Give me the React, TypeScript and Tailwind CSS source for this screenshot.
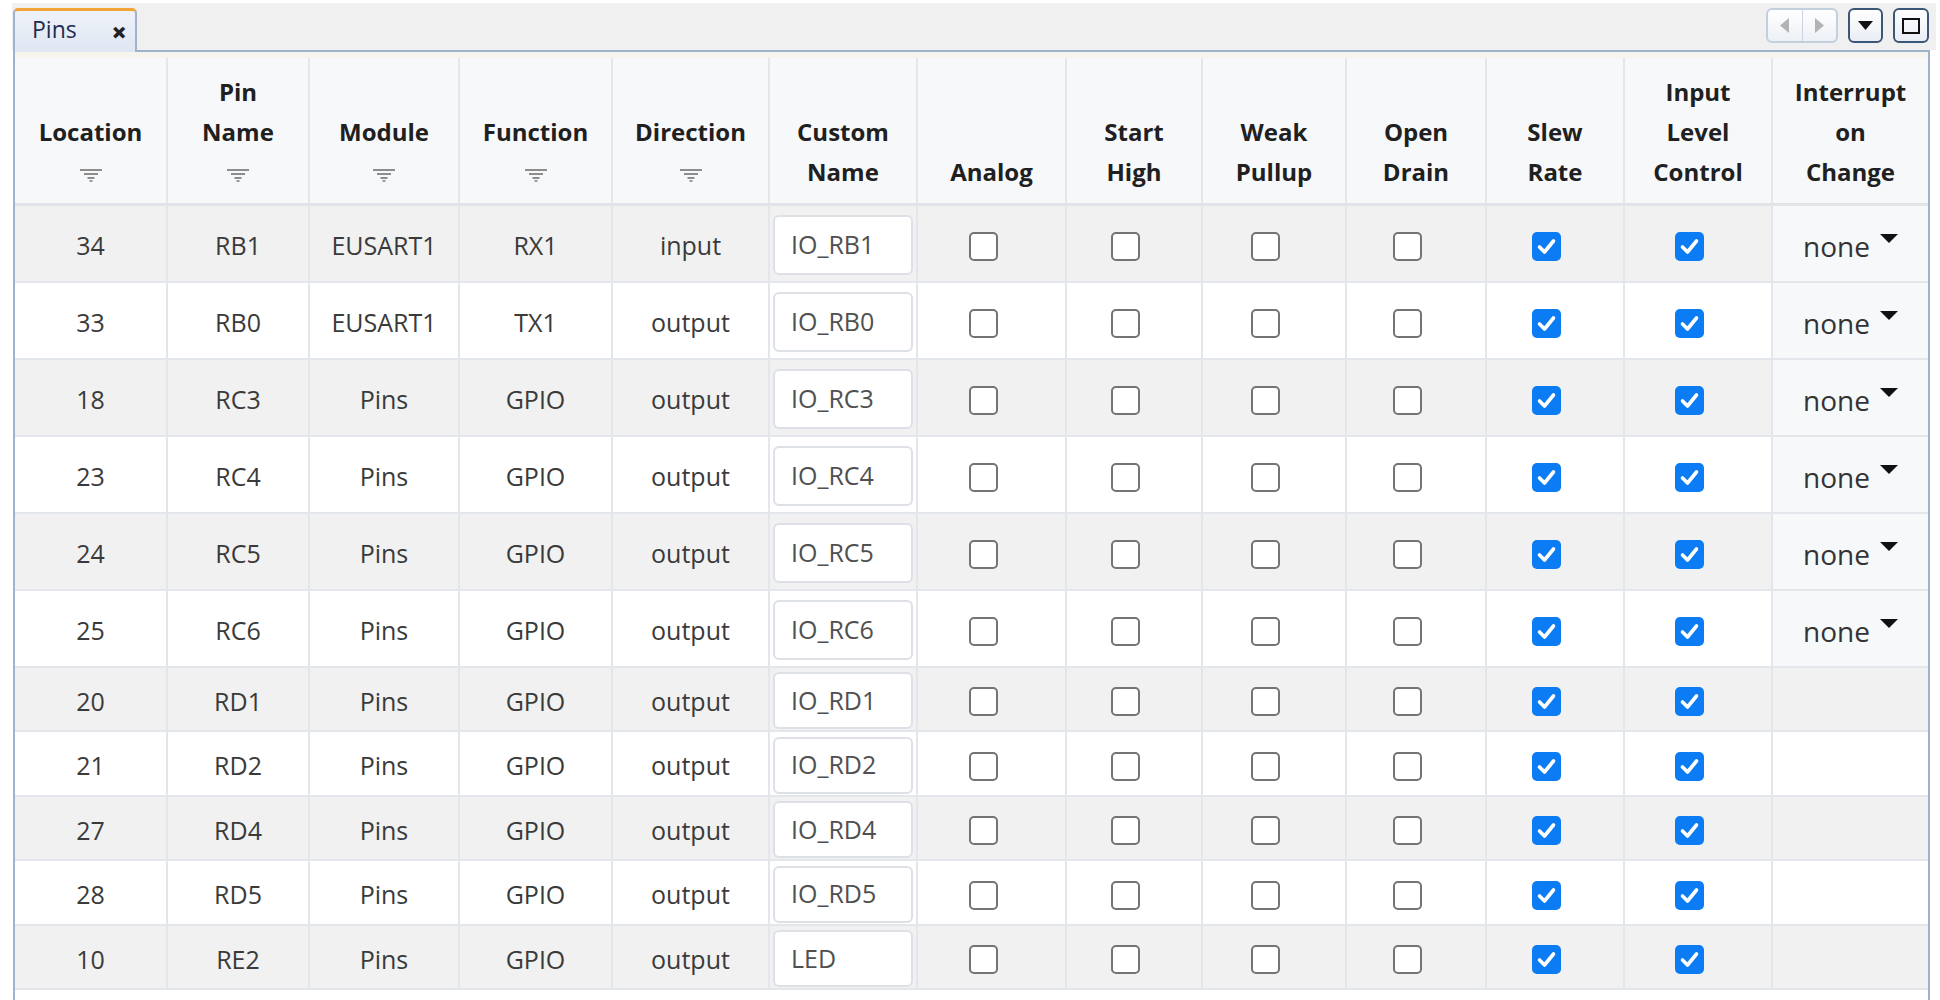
import React from "react";

type Pin = {
  loc: string;
  pin: string;
  mod: string;
  fn: string;
  dir: string;
  name: string;
  ioc: boolean;
};

const pins: Pin[] = [
  { loc: "34", pin: "RB1", mod: "EUSART1", fn: "RX1", dir: "input", name: "IO_RB1", ioc: true },
  { loc: "33", pin: "RB0", mod: "EUSART1", fn: "TX1", dir: "output", name: "IO_RB0", ioc: true },
  { loc: "18", pin: "RC3", mod: "Pins", fn: "GPIO", dir: "output", name: "IO_RC3", ioc: true },
  { loc: "23", pin: "RC4", mod: "Pins", fn: "GPIO", dir: "output", name: "IO_RC4", ioc: true },
  { loc: "24", pin: "RC5", mod: "Pins", fn: "GPIO", dir: "output", name: "IO_RC5", ioc: true },
  { loc: "25", pin: "RC6", mod: "Pins", fn: "GPIO", dir: "output", name: "IO_RC6", ioc: true },
  { loc: "20", pin: "RD1", mod: "Pins", fn: "GPIO", dir: "output", name: "IO_RD1", ioc: false },
  { loc: "21", pin: "RD2", mod: "Pins", fn: "GPIO", dir: "output", name: "IO_RD2", ioc: false },
  { loc: "27", pin: "RD4", mod: "Pins", fn: "GPIO", dir: "output", name: "IO_RD4", ioc: false },
  { loc: "28", pin: "RD5", mod: "Pins", fn: "GPIO", dir: "output", name: "IO_RD5", ioc: false },
  { loc: "10", pin: "RE2", mod: "Pins", fn: "GPIO", dir: "output", name: "LED", ioc: false },
];

// short rows alternate 64/65 so the table ends where the screenshot does
const shortHeights = ["h-[64px]", "h-[65px]", "h-[64px]", "h-[65px]", "h-[64px]"];

const gridCols =
  "grid grid-cols-[153px_142px_150px_153px_157px_148px_149px_136px_144px_140px_138px_148px_155px]";

const headers: { lines: string[]; filter?: boolean }[] = [
  { lines: ["Location"], filter: true },
  { lines: ["Pin", "Name"], filter: true },
  { lines: ["Module"], filter: true },
  { lines: ["Function"], filter: true },
  { lines: ["Direction"], filter: true },
  { lines: ["Custom", "Name"] },
  { lines: ["Analog"] },
  { lines: ["Start", "High"] },
  { lines: ["Weak", "Pullup"] },
  { lines: ["Open", "Drain"] },
  { lines: ["Slew", "Rate"] },
  { lines: ["Input", "Level", "Control"] },
  { lines: ["Interrupt", "on", "Change"] },
];

function FilterIcon() {
  return (
    <svg width="22" height="13" viewBox="0 0 22 13">
      <rect x="0" y="0" width="22" height="2" fill="#8d8d8d" />
      <rect x="4" y="4" width="14" height="2" fill="#8d8d8d" />
      <rect x="7.5" y="8" width="7" height="2" fill="#8d8d8d" />
      <rect x="9.5" y="11" width="3" height="2" fill="#9a9a9a" />
    </svg>
  );
}

function Check({ on }: { on: boolean }) {
  if (on) {
    return (
      <svg width="29" height="29" viewBox="0 0 29 29">
        <rect x="0" y="0" width="29" height="29" rx="5" fill="#0b7cf4" />
        <polyline
          points="7.5,15 12.5,20 21.5,9"
          fill="none"
          stroke="#ffffff"
          strokeWidth="3.6"
          strokeLinecap="round"
          strokeLinejoin="round"
        />
      </svg>
    );
  }
  return <div className="size-[29px] rounded-[5px] border-[2.5px] border-[#747474] bg-white" />;
}

function Cell({ children, className = "" }: { children?: React.ReactNode; className?: string }) {
  return (
    <div className={`flex items-center justify-center border-r-2 border-[#e3e6ea] pt-[5px] ${className}`}>
      {children}
    </div>
  );
}

export default function App() {
  return (
    <div
      className="w-[1940px] h-[1000px] bg-white pt-[3px] pl-[12px] overflow-hidden text-[#3a3a3a]"
      style={{ fontFamily: '"Open Sans", "Noto Sans", sans-serif' }}
    >
      <div className="w-[1924px] h-[997px] flex flex-col bg-white">
        {/* tab strip */}
        <div className="h-[47px] bg-[#f0f0f0] flex items-end pl-[1px] pr-[7px]">
          <div className="relative z-10 -mb-[2px] h-[44px] w-[124px] rounded-t-[5px] border-t-[3px] border-x-2 border-t-[#f2a33a] border-x-[#9fb3cc] bg-gradient-to-b from-[#eef2f9] to-[#dfe6f2] flex items-center pl-[17px] pr-[8px] pb-[4px]">
            <span className="text-[23px] text-[#1f2b50]">Pins</span>
            <span className="ml-auto mt-[3px] text-[27px] font-extrabold leading-none text-[#222]">×</span>
          </div>
          <div className="ml-auto self-start mt-[5px] flex gap-[10px]">
            <div className="h-[35px] w-[72px] flex rounded-[6px] border-2 border-[#c2cfdf] bg-gradient-to-b from-white to-[#edf1f6]">
              <div className="flex-1 flex items-center justify-center border-r border-[#c9d4e2]">
                <svg width="9" height="15" viewBox="0 0 9 15">
                  <polygon points="9,0 9,15 0,7.5" fill="#b3b3b3" />
                </svg>
              </div>
              <div className="flex-1 flex items-center justify-center">
                <svg width="9" height="15" viewBox="0 0 9 15">
                  <polygon points="0,0 0,15 9,7.5" fill="#b3b3b3" />
                </svg>
              </div>
            </div>
            <div className="h-[35px] w-[35px] flex items-center justify-center rounded-[6px] border-2 border-[#3c5677] bg-gradient-to-b from-white to-[#e9eef5]">
              <svg width="15" height="9" viewBox="0 0 15 9">
                <polygon points="0,0 15,0 7.5,9" fill="#111" />
              </svg>
            </div>
            <div className="h-[35px] w-[36px] flex items-center justify-center rounded-[6px] border-2 border-[#3c5677] bg-gradient-to-b from-white to-[#e9eef5]">
              <div className="w-[18px] h-[16px] border-2 border-[#111]" />
            </div>
          </div>
        </div>

        {/* table frame */}
        <div className="flex-1 ml-[1px] w-[1917px] border-l-2 border-r-2 border-t-2 border-[#9fb3cc] bg-white">
          <div className="h-[6px] bg-[#f5f5ee]" />
          <div className={`${gridCols} h-[148px] border-b-[3px] border-[#e1e4e8] bg-[#f7f8fa]`}>
            {headers.map((h, i) => (
              <div
                key={i}
                className={`flex flex-col items-center justify-end pb-[11px] text-center text-[24px] font-bold leading-[40px] text-[#202020] ${
                  i < headers.length - 1 ? "border-r-2 border-[#e3e6ea]" : ""
                }`}
              >
                {h.lines.map((l) => (
                  <div key={l}>{l}</div>
                ))}
                {h.filter && (
                  <div className="h-[40px] flex items-center justify-center pt-[6px]">
                    <FilterIcon />
                  </div>
                )}
              </div>
            ))}
          </div>

          {pins.map((p, i) => {
            const tall = i < 6;
            const rowH = tall ? "h-[77px]" : shortHeights[i - 6];
            const bg = i % 2 === 0 ? "bg-[#f1f1f1]" : "bg-white";
            return (
              <div key={p.loc} className={`${gridCols} ${rowH} ${bg} border-b-2 border-[#e3e6ea] text-[25px]`}>
                <Cell>{p.loc}</Cell>
                <Cell>{p.pin}</Cell>
                <Cell>{p.mod}</Cell>
                <Cell>{p.fn}</Cell>
                <Cell>{p.dir}</Cell>
                <div className="flex items-center justify-center border-r-2 border-[#e3e6ea] px-[3px] pt-[3px]">
                  <div
                    className={`w-full ${
                      tall ? "h-[60px]" : "h-[57px]"
                    } flex items-center rounded-[6px] border-2 border-[#dde1e6] bg-white pl-[16px] text-[#505050]`}
                  >
                    {p.name}
                  </div>
                </div>
                <Cell className="pr-[17px]">
                  <Check on={false} />
                </Cell>
                <Cell className="pr-[17px]">
                  <Check on={false} />
                </Cell>
                <Cell className="pr-[17px]">
                  <Check on={false} />
                </Cell>
                <Cell className="pr-[17px]">
                  <Check on={false} />
                </Cell>
                <Cell className="pr-[17px]">
                  <Check on={true} />
                </Cell>
                <Cell className="pr-[17px]">
                  <Check on={true} />
                </Cell>
                {p.ioc ? (
                  <div className="flex items-center justify-center bg-[#f7f8fa] pt-[5px]">
                    <div className="flex items-start gap-[10px] text-[28px] text-[#333]">
                      <span>none</span>
                      <svg width="18" height="9" viewBox="0 0 18 9" className="mt-[9px]">
                        <polygon points="0,0 18,0 9,9" fill="#111" />
                      </svg>
                    </div>
                  </div>
                ) : (
                  <div />
                )}
              </div>
            );
          })}
        </div>
      </div>
    </div>
  );
}
